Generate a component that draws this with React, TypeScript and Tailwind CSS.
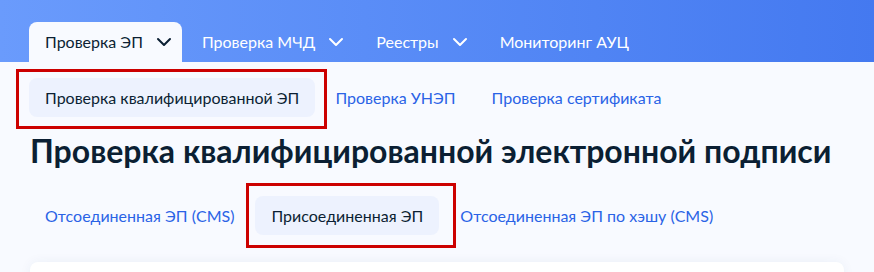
import { ChevronDown } from 'lucide-react';

const TOP_TABS = [
  { label: 'Проверка ЭП', active: true, menu: true },
  { label: 'Проверка МЧД', active: false, menu: true },
  { label: 'Реестры', active: false, menu: true },
  { label: 'Мониторинг АУЦ', active: false, menu: false },
];

const SUB_TABS = ['Проверка квалифицированной ЭП', 'Проверка УНЭП', 'Проверка сертификата'];

const MODE_TABS = ['Отсоединенная ЭП (CMS)', 'Присоединенная ЭП', 'Отсоединенная ЭП по хэшу (CMS)'];

const App = () => {
  return (
    <div className="w-[874px] h-[272px] overflow-hidden bg-[#f8faff] font-['Lato','Noto_Sans',sans-serif] text-[#0b1f33]">
      {/* Header */}
      <div className="h-[62px] bg-gradient-to-r from-[#6a9bfc] to-[#4479f0] flex items-end pl-[29px] gap-1">
        {TOP_TABS.map((tab) => (
          <div
            key={tab.label}
            className={[
              'h-[40px] pl-4 flex items-center gap-[9px] text-[16px] rounded-t-[8px]',
              tab.active ? 'pr-[6px] bg-[#f8faff] text-[#0b1f33]' : 'pr-2 text-white',
            ].join(' ')}
          >
            <span>{tab.label}</span>
            {tab.menu && <ChevronDown size={24} strokeWidth={2} />}
          </div>
        ))}
      </div>

      {/* Sub navigation */}
      <div className="flex items-center gap-[4px] pl-[29px] mt-[16px]">
        {SUB_TABS.map((label, i) =>
          i === 0 ? (
            <div key={label} className="relative">
              <div className="h-[39px] px-4 flex items-center rounded-[8px] bg-[#edf2fe] text-[16px] text-[#0b1f33]">
                {label}
              </div>
              <div className="absolute -left-[13px] -top-[9px] -right-[12px] -bottom-[12px] border-[3px] border-[#cc0000]" />
            </div>
          ) : (
            <div key={label} className="h-[39px] px-4 flex items-center text-[16px] text-[#2a63e6]">
              {label}
            </div>
          ),
        )}
      </div>

      {/* Title */}
      <h1 className="pl-[30px] mt-[14px] text-[32px] leading-[40px] font-bold text-[#0b1f33]">
        Проверка квалифицированной электронной подписи
      </h1>

      {/* Mode tabs */}
      <div className="flex items-center gap-[5px] pl-[29px] mt-[25px]">
        {MODE_TABS.map((label, i) =>
          i === 1 ? (
            <div key={label} className="relative">
              <div className="h-[39px] px-4 flex items-center rounded-[8px] bg-[#edf2fe] text-[16px] text-[#0b1f33]">
                {label}
              </div>
              <div className="absolute -left-[9px] -top-[13px] -right-[17px] -bottom-[13px] border-[3px] border-[#cc0000]" />
            </div>
          ) : (
            <div key={label} className="h-[39px] px-4 flex items-center text-[16px] text-[#2a63e6]">
              {label}
            </div>
          ),
        )}
      </div>

      {/* Card */}
      <div className="ml-[30px] mr-[30px] mt-[27px] h-[60px] rounded-[8px] bg-white shadow-[0_0_12px_rgba(30,60,120,0.06)]" />
    </div>
  );
};

export default App;
